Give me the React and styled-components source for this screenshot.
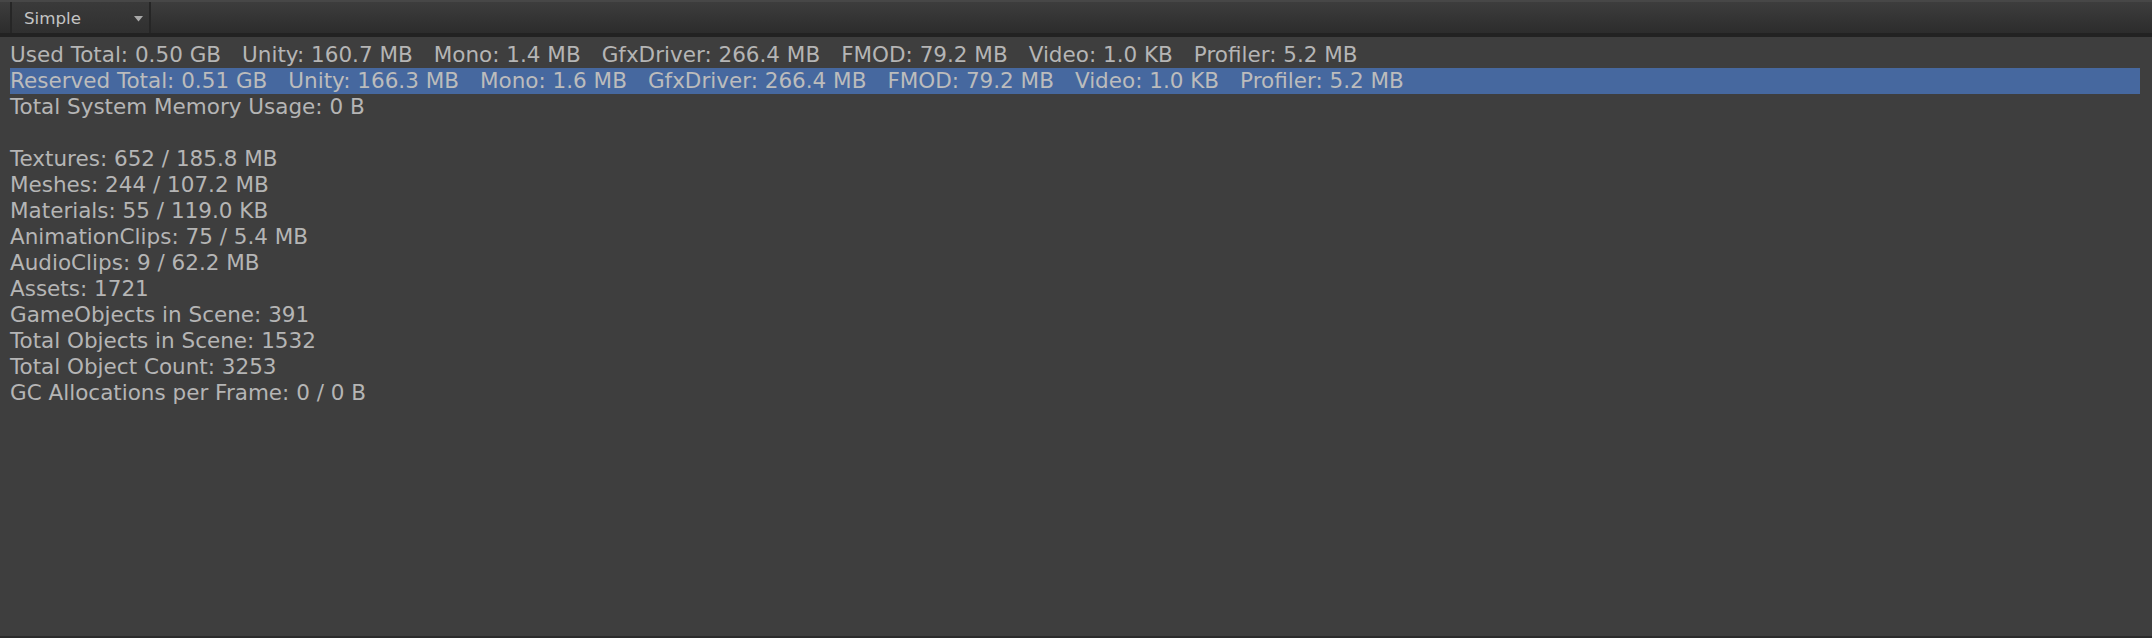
import React from "react";
import styled, { createGlobalStyle } from "styled-components";

const Global = createGlobalStyle`
  html, body { margin: 0; padding: 0; background: #3e3e3e; }
  #root { width: 2152px; height: 638px; }
`;

const Window = styled.div`
  width: 2152px;
  height: 638px;
  display: flex;
  flex-direction: column;
  background: #3e3e3e;
  font-family: "DejaVu Sans", "Open Sans", sans-serif;
  color: #b5b5b5;
  box-sizing: border-box;
  border-bottom: 2px solid #2b2b2b;
  overflow: hidden;
`;

const Toolbar = styled.div`
  height: 37px;
  flex: none;
  box-sizing: border-box;
  display: flex;
  align-items: stretch;
  padding-left: 10px;
  background: linear-gradient(#3d3d3d, #2c2c2c);
  border-top: 2px solid #474747;
  border-bottom: 4px solid #222222;
`;

const Dropdown = styled.div`
  width: 141px;
  box-sizing: border-box;
  display: flex;
  align-items: center;
  justify-content: space-between;
  padding: 0 6px 0 12px;
  border-left: 2px solid #262626;
  border-right: 2px solid #262626;
  background: linear-gradient(#3a3a3a, #303030);
  font-size: 16.7px;
  color: #c4c4c4;
`;

const Arrow = styled.svg`
  width: 9px;
  height: 6px;
  margin-top: 3px;
`;

const Content = styled.div`
  flex: 1;
  padding: 5px 12px 0 10px;
  font-size: 21.5px;
  line-height: 26px;
`;

const Line = styled.div`
  height: 26px;
  display: flex;
  gap: 21px;
  white-space: pre;
  background: ${(p) => (p.$selected ? "#46689f" : "transparent")};
  color: ${(p) => (p.$selected ? "#bcbcbc" : "#b5b5b5")};
`;

const usedItems = [
  "Used Total: 0.50 GB",
  "Unity: 160.7 MB",
  "Mono: 1.4 MB",
  "GfxDriver: 266.4 MB",
  "FMOD: 79.2 MB",
  "Video: 1.0 KB",
  "Profiler: 5.2 MB",
];

const reservedItems = [
  "Reserved Total: 0.51 GB",
  "Unity: 166.3 MB",
  "Mono: 1.6 MB",
  "GfxDriver: 266.4 MB",
  "FMOD: 79.2 MB",
  "Video: 1.0 KB",
  "Profiler: 5.2 MB",
];

const stats = [
  "Textures: 652 / 185.8 MB",
  "Meshes: 244 / 107.2 MB",
  "Materials: 55 / 119.0 KB",
  "AnimationClips: 75 / 5.4 MB",
  "AudioClips: 9 / 62.2 MB",
  "Assets: 1721",
  "GameObjects in Scene: 391",
  "Total Objects in Scene: 1532",
  "Total Object Count: 3253",
  "GC Allocations per Frame: 0 / 0 B",
];

export default function App() {
  return (
    <>
      <Global />
      <Window>
        <Toolbar>
          <Dropdown>
            <span>Simple</span>
            <Arrow viewBox="0 0 9 6">
              <path d="M0 0 H9 L4.5 5.5 Z" fill="#a8a8a8" />
            </Arrow>
          </Dropdown>
        </Toolbar>
        <Content>
          <Line>
            {usedItems.map((t) => (
              <span key={t}>{t}</span>
            ))}
          </Line>
          <Line $selected>
            {reservedItems.map((t) => (
              <span key={t}>{t}</span>
            ))}
          </Line>
          <Line>Total System Memory Usage: 0 B</Line>
          <Line />
          {stats.map((t) => (
            <Line key={t}>{t}</Line>
          ))}
        </Content>
      </Window>
    </>
  );
}
